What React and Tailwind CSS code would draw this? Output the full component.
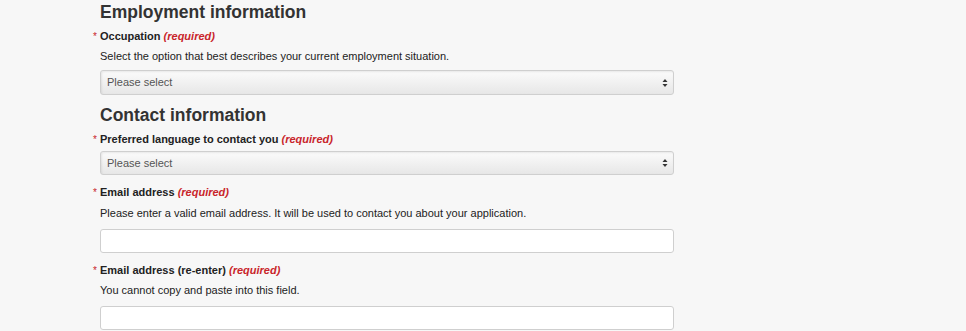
const FONT = { fontFamily: '"Liberation Sans", Arial, Helvetica, sans-serif' };

function Label({ children, className = '' }) {
  return (
    <div className={`text-[11px] leading-[16px] font-bold text-[#222] ${className}`}>
      <span className="inline-block w-[7px] -ml-[7px] text-[#c9252b] text-[10px] font-normal">*</span>
      {children} <em className="text-[#c9252b]">(required)</em>
    </div>
  );
}

function Help({ children, className = '' }) {
  return <p className={`text-[11px] leading-[16px] text-[#222] ${className}`}>{children}</p>;
}

function Select({ className = '', h = 'h-[25px]' }) {
  return (
    <div
      className={`${h} w-full flex items-center justify-between rounded-[3px] border border-[#cfcfcf] bg-gradient-to-b from-[#fbfbfb] to-[#e7e7e7] shadow-[inset_1px_1px_2px_rgba(0,0,0,0.08)] pl-[6px] pr-[5px] ${className}`}
    >
      <span className="text-[11px] text-[#555]">Please select</span>
      <svg width="6" height="10" viewBox="0 0 6 10">
        <path d="M3 1 L5.5 4 H0.5 Z" fill="#333" />
        <path d="M3 9 L5.5 6 H0.5 Z" fill="#333" />
      </svg>
    </div>
  );
}

function Input({ className = '' }) {
  return <div className={`h-[24px] w-full rounded-[3px] border border-[#cfcfcf] bg-white ${className}`} />;
}

export default function App() {
  return (
    <div className="w-[966px] h-[331px] overflow-hidden bg-[#f7f7f7]" style={FONT}>
      <div className="ml-[100px] w-[574px] flex flex-col">
        <h2 className="text-[17.5px] leading-[24px] font-bold text-[#333]">Employment information</h2>
        <Label className="mt-[4px]">Occupation</Label>
        <Help className="mt-[3px]">Select the option that best describes your current employment situation.</Help>
        <Select className="mt-[6px]" />

        <h2 className="mt-[8px] text-[17.5px] leading-[24px] font-bold text-[#333]">Contact information</h2>
        <Label className="mt-[4px]">Preferred language to contact you</Label>
        <Select className="mt-[3px]" h="h-[24px]" />

        <Label className="mt-[9px]">Email address</Label>
        <Help className="mt-[4px]">Please enter a valid email address. It will be used to contact you about your application.</Help>
        <Input className="mt-[8px]" />

        <Label className="mt-[9px]">Email address (re-enter)</Label>
        <Help className="mt-[3px]">You cannot copy and paste into this field.</Help>
        <Input className="mt-[8px]" />
      </div>
    </div>
  );
}
